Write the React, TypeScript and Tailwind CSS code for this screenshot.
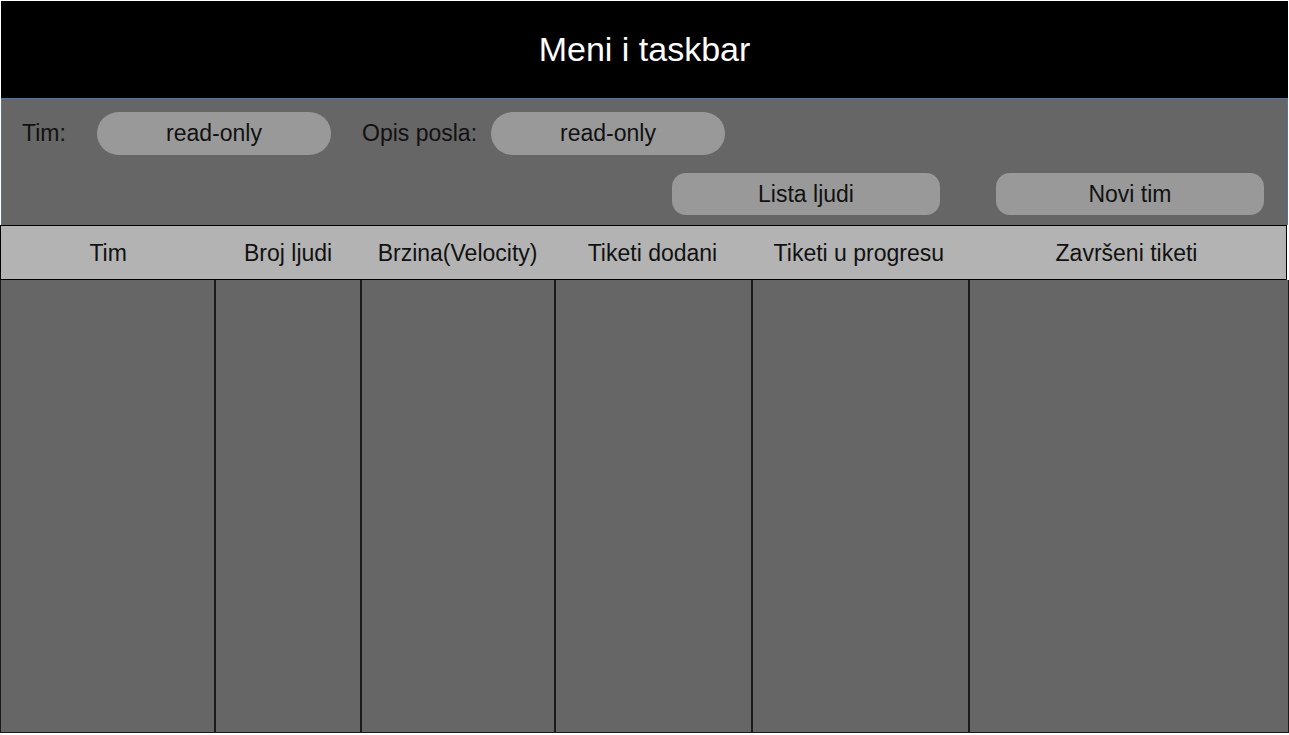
const columns = [
  { label: 'Tim', width: 215 },
  { label: 'Broj ljudi', width: 146 },
  { label: 'Brzina(Velocity)', width: 194 },
  { label: 'Tiketi dodani', width: 197 },
  { label: 'Tiketi u progresu', width: 217 },
  { label: 'Završeni tiketi', width: 320 },
];

function Pill({ text }: { text: string }) {
  return (
    <div className="flex h-[43px] w-[234px] items-center justify-center rounded-full bg-[#999999] text-[23px] text-[#111]">
      {text}
    </div>
  );
}

function ActionButton({ text }: { text: string }) {
  return (
    <button
      type="button"
      className="flex h-[42px] w-[268px] items-center justify-center rounded-[14px] bg-[#999999] text-[23px] text-[#111]"
    >
      {text}
    </button>
  );
}

export default function App() {
  return (
    <div
      className="flex h-[735px] w-[1289px] flex-col overflow-hidden bg-white"
      style={{ fontFamily: '"Liberation Sans", Arial, sans-serif' }}
    >
      <div className="mx-[1px] mt-[1px] flex h-[97px] items-center justify-center bg-black text-[34px] text-white">
        Meni i taskbar
      </div>

      <div className="ml-[1px] mr-[1px] h-[127px] border-x border-t border-[#5b7391] bg-[#666666]">
        <div className="mt-[13px] flex items-center">
          <span className="w-[95px] pl-[20px] text-[23px] text-[#111]">Tim:</span>
          <Pill text="read-only" />
          <span className="ml-[31px] w-[129px] text-[23px] text-[#111]">Opis posla:</span>
          <Pill text="read-only" />
        </div>
        <div className="mt-[18px] flex justify-end gap-[56px] pr-[23px]">
          <ActionButton text="Lista ljudi" />
          <ActionButton text="Novi tim" />
        </div>
      </div>

      <div className="flex h-[55px] w-[1287px] border border-black bg-[#b3b3b3]">
        {columns.map((c) => (
          <div
            key={c.label}
            className="flex items-center justify-center pt-[2px] text-[23px] text-[#111]"
            style={{ width: c.width }}
          >
            {c.label}
          </div>
        ))}
      </div>

      <div className="flex h-[453px]">
        {columns.map((c) => (
          <div
            key={c.label}
            className="h-full border-x border-b border-[#1a1a1a] bg-[#666666]"
            style={{ width: c.width }}
          />
        ))}
      </div>
    </div>
  );
}
